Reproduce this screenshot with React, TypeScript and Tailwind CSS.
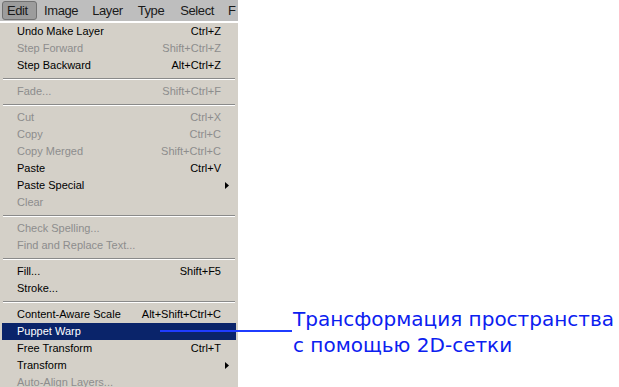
import React from 'react'

type Item = { label: string; shortcut?: string; disabled?: boolean; sub?: boolean; active?: boolean } | 'sep'

const items: Item[] = [
  { label: 'Undo Make Layer', shortcut: 'Ctrl+Z' },
  { label: 'Step Forward', shortcut: 'Shift+Ctrl+Z', disabled: true },
  { label: 'Step Backward', shortcut: 'Alt+Ctrl+Z' },
  'sep',
  { label: 'Fade...', shortcut: 'Shift+Ctrl+F', disabled: true },
  'sep',
  { label: 'Cut', shortcut: 'Ctrl+X', disabled: true },
  { label: 'Copy', shortcut: 'Ctrl+C', disabled: true },
  { label: 'Copy Merged', shortcut: 'Shift+Ctrl+C', disabled: true },
  { label: 'Paste', shortcut: 'Ctrl+V' },
  { label: 'Paste Special', sub: true },
  { label: 'Clear', disabled: true },
  'sep',
  { label: 'Check Spelling...', disabled: true },
  { label: 'Find and Replace Text...', disabled: true },
  'sep',
  { label: 'Fill...', shortcut: 'Shift+F5' },
  { label: 'Stroke...' },
  'sep',
  { label: 'Content-Aware Scale', shortcut: 'Alt+Shift+Ctrl+C' },
  { label: 'Puppet Warp', active: true },
  { label: 'Free Transform', shortcut: 'Ctrl+T' },
  { label: 'Transform', sub: true },
  { label: 'Auto-Align Layers...', disabled: true },
]

function Arrow({ light }: { light?: boolean }) {
  return (
    <svg width="4" height="7" viewBox="0 0 4 7" className="absolute right-[7px] top-[5px]">
      <path d="M0 0 L4 3.5 L0 7 Z" fill={light ? '#fff' : '#000'} />
    </svg>
  )
}

export default function App() {
  return (
    <div className="relative w-[619px] h-[387px] bg-white overflow-hidden" style={{ fontFamily: 'Tahoma, "Liberation Sans", sans-serif' }}>
      <div className="w-[238px]">
        <div className="flex items-center h-[21px] bg-[#bebebe] text-[13px] text-[#1a1a1a] overflow-hidden whitespace-nowrap tracking-[-0.4px]">
          <div className="ml-[2px] w-[35px] shrink-0 h-[19px] pl-[4px] flex items-center rounded-[3px] bg-[#9c9c9c] border border-[#727272]">Edit</div>
          <span className="ml-[7px] shrink-0">Image</span>
          <span className="ml-[14px] shrink-0">Layer</span>
          <span className="ml-[15px] shrink-0">Type</span>
          <span className="ml-[16px] shrink-0">Select</span>
          <span className="ml-[14px] shrink-0">F</span>
        </div>
        <div className="bg-[#d4d0c8] border-t-2 border-white pb-[4px] text-[11px]">
          {items.map((it, i) =>
            it === 'sep' ? (
              <div key={i} className="h-[9px] flex flex-col justify-center px-[3px]">
                <div className="h-px bg-[#8a8a8a]" />
                <div className="h-px bg-white" />
              </div>
            ) : (
              <div
                key={i}
                className={`relative h-[17px] mx-[2px] pl-[15px] pr-[15px] flex items-center justify-between ${
                  it.active ? 'bg-[#0a246a] text-white' : it.disabled ? 'text-[#8d8d8d]' : 'text-black'
                }`}
              >
                <span>{it.label}</span>
                {it.shortcut && <span>{it.shortcut}</span>}
                {it.sub && <Arrow light={it.active} />}
              </div>
            )
          )}
        </div>
      </div>
      <div className="absolute left-[160px] top-[330px] w-[132px] h-[2px] bg-[#1f3cff]" />
      <div className="absolute left-[293px] top-[306px] text-[20px] leading-[26px] text-[#0b20f0]" style={{ fontFamily: '"DejaVu Sans", Verdana, sans-serif' }}>
        <div>Трансформация пространства</div>
        <div>с помощью 2D-сетки</div>
      </div>
    </div>
  )
}
